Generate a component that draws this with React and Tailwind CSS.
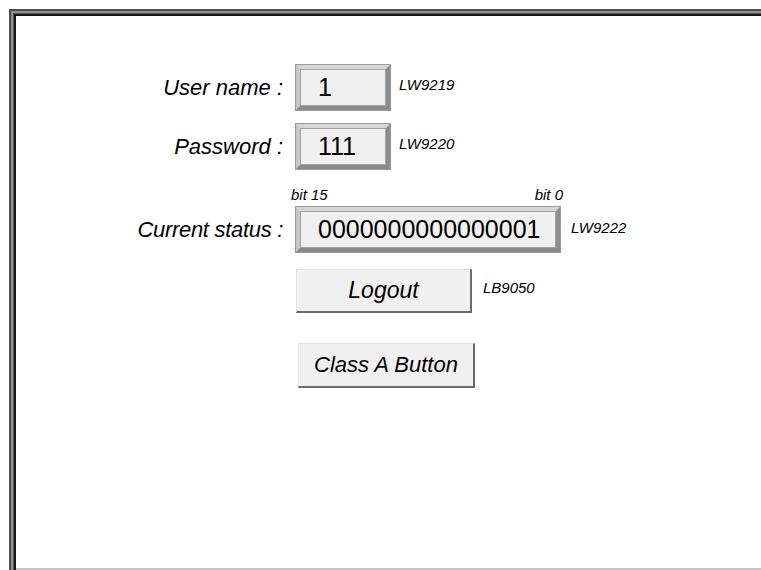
import React from "react";

const font = { fontFamily: '"Liberation Sans", Arial, sans-serif' };

const Field = ({ value, width }) => (
  <div
    className={`${width} h-[45px] border-[4px] border-t-[#d6d6d6] border-l-[#c6c6c6] border-r-[#8c8c8c] border-b-[#8a8a8a] outline outline-1 outline-[#9a9a9a] flex`}
  >
    <div className="flex-1 bg-[#f0f0f0] border border-[#a4a4a4] flex items-center pl-[17px] text-[25px] text-black leading-none">
      {value}
    </div>
  </div>
);

const Caption = ({ children, className = "" }) => (
  <span className={`italic text-[15px] text-black leading-none ${className}`}>
    {children}
  </span>
);

const Label = ({ children, className = "" }) => (
  <div className={`w-[267px] text-right italic text-[22px] text-black leading-none ${className}`}>
    {children}
  </div>
);

export default function App() {
  return (
    <div className="w-[761px] h-[570px] overflow-hidden bg-white pt-[9px] pl-[9px]" style={font}>
      <div className="h-full border-t-2 border-l-2 border-[#4c4c4c]">
        <div className="h-full border-t-2 border-l-2 border-[#8e8e8e]">
          <div className="h-full border-t border-l border-[#5c5c5c]">
            <div className="h-full border-t-2 border-l-2 border-[#161616] bg-white flex flex-col">
              <div className="flex-1 flex flex-col pt-[49px]">
                {/* user name */}
                <div className="flex items-center">
                  <Label>User name :</Label>
                  <div className="ml-[13px]">
                    <Field value="1" width="w-[94px]" />
                  </div>
                  <Caption className="ml-[9px] self-start mt-[12px]">LW9219</Caption>
                </div>

                {/* password */}
                <div className="flex items-center mt-[14px]">
                  <Label>Password :</Label>
                  <div className="ml-[13px]">
                    <Field value="111" width="w-[94px]" />
                  </div>
                  <Caption className="ml-[9px] self-start mt-[12px]">LW9220</Caption>
                </div>

                {/* bit labels */}
                <div className="flex mt-[18px] pl-[275px] w-[547px] justify-between">
                  <Caption className="text-[14px]">bit 15</Caption>
                  <Caption className="text-[14px]">bit 0</Caption>
                </div>

                {/* current status */}
                <div className="flex items-center mt-[5px]">
                  <Label className="tracking-[-0.3px]">Current status :</Label>
                  <div className="ml-[13px]">
                    <Field value="0000000000000001" width="w-[264px]" />
                  </div>
                  <Caption className="ml-[11px] mt-[-4px]">LW9222</Caption>
                </div>

                {/* logout */}
                <div className="flex items-start mt-[17px] pl-[280px]">
                  <button className="w-[176px] h-[44px] bg-[#f0f0f0] border-t border-l border-[#e2e2e2] border-r-2 border-b-2 border-r-[#6a6a6a] border-b-[#6a6a6a] italic text-[23px] text-black leading-none">
                    Logout
                  </button>
                  <Caption className="ml-[11px] mt-[11px]">LB9050</Caption>
                </div>

                {/* class a button */}
                <div className="flex mt-[30px] pl-[282px]">
                  <button className="w-[177px] h-[45px] bg-[#f0f0f0] border-t border-l border-[#e2e2e2] border-r-2 border-b-2 border-r-[#6a6a6a] border-b-[#6a6a6a] italic text-[22px] text-black leading-none">
                    Class A Button
                  </button>
                </div>
              </div>
              <div className="h-[2px] bg-[#c4c4c4]" />
            </div>
          </div>
        </div>
      </div>
    </div>
  );
}
